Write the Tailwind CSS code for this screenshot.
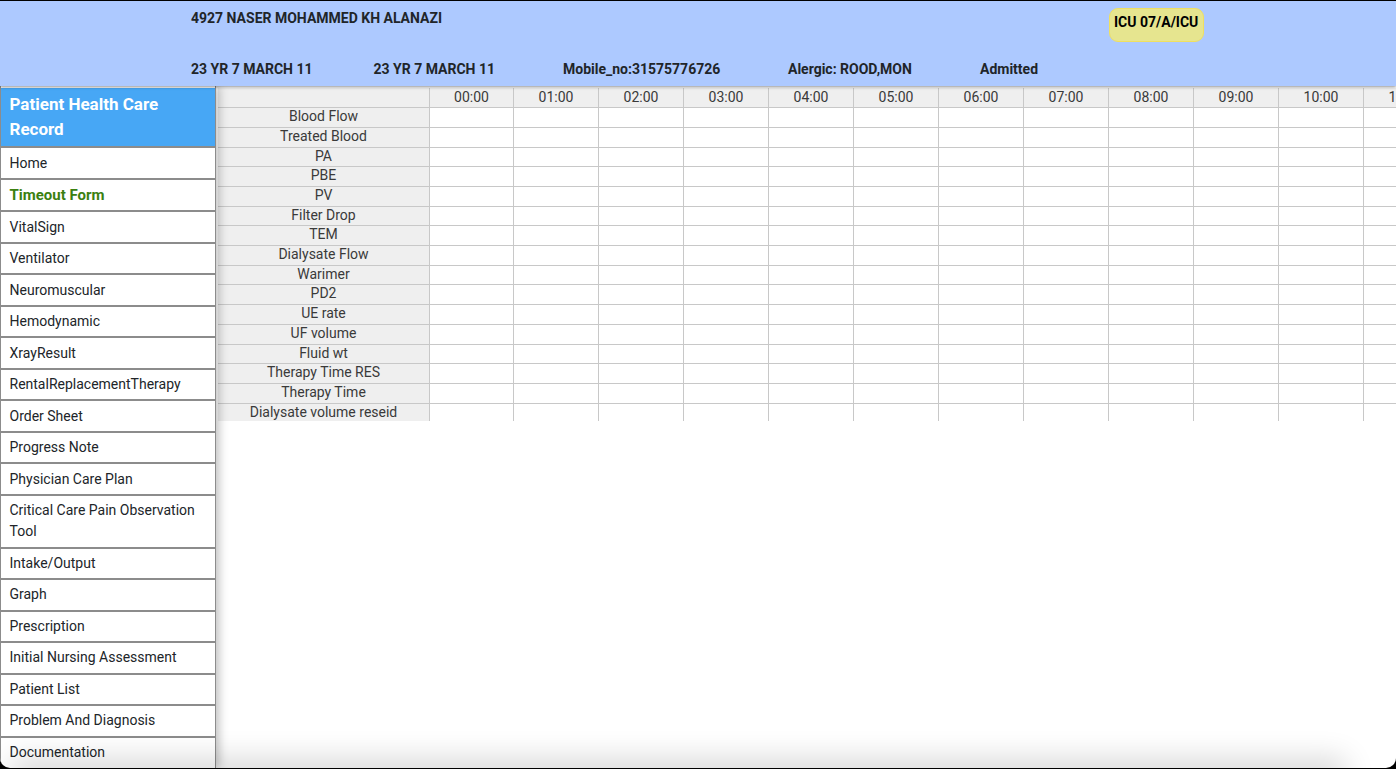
<!DOCTYPE html>
<html lang="en">
<head>
    <meta charset="utf-8">
    <title>Patient Health Care Record</title>
    <script src="https://cdn.jsdelivr.net/npm/@tailwindcss/browser@4"></script>
</head>
<body class="bg-black font-['Roboto',sans-serif] overflow-hidden">

<div class="relative h-[769px] w-[1396px] pt-px pb-px">
    <div class="relative flex h-full flex-col overflow-hidden rounded-b-[10px] bg-white">

        <!-- Patient banner -->
        <header class="relative z-20 h-[85px] shrink-0 bg-[#adc9ff] pl-[191px] text-[14px] font-bold text-[#212529] shadow-[0_1px_3px_rgba(0,0,0,0.45)]">
            <div class="flex h-[50px] pt-[9px]">
                <span class="w-[918px] leading-[17px]">4927 NASER MOHAMMED KH ALANAZI</span>
                <span class="h-[34px] -mt-[2px] w-[95px] rounded-[9px] border border-[#f0e060] bg-[#e6e58f] pl-[4px] pt-[5px] leading-[17px] text-black">ICU 07/A/ICU</span>
            </div>
            <div class="flex leading-[17px] pt-[10px]">
                <span class="w-[182.5px]">23 YR 7 MARCH 11</span>
                <span class="w-[189.5px]">23 YR 7 MARCH 11</span>
                <span class="w-[225px]">Mobile_no:31575776726</span>
                <span class="w-[192px]">Alergic: ROOD,MON</span>
                <span>Admitted</span>
            </div>
        </header>

        <div class="flex min-h-0 flex-1">
            <!-- Sidebar -->
            <nav class="relative z-10 w-[216px] shrink-0 border-x border-[#8c8c8c] pt-[2px] text-[14px] text-[#212529] shadow-[3px_0_9px_rgba(0,0,0,0.25)]">
                <div class="h-[60px] border-b-2 border-[#8c8c8c] bg-[#47a7f5] pl-[8.5px] pr-[20px] pt-[4px] text-[17px] font-bold leading-[25px] text-white">Patient Health Care Record</div>
                <a class="block h-[31.5px] border-b-2 border-[#8c8c8c] px-[8.5px] pt-[4.6px] leading-[20px]">Home</a>
                <a class="block h-[32.5px] border-b-2 border-[#8c8c8c] px-[8.5px] pt-[5px] text-[15px] font-bold leading-[20px] text-[#3b8010]">Timeout Form</a>
                <a class="block h-[31.5px] border-b-2 border-[#8c8c8c] px-[8.5px] pt-[4.6px] leading-[20px]">VitalSign</a>
                <a class="block h-[31.5px] border-b-2 border-[#8c8c8c] px-[8.5px] pt-[4.6px] leading-[20px]">Ventilator</a>
                <a class="block h-[31.5px] border-b-2 border-[#8c8c8c] px-[8.5px] pt-[4.6px] leading-[20px]">Neuromuscular</a>
                <a class="block h-[31.5px] border-b-2 border-[#8c8c8c] px-[8.5px] pt-[4.6px] leading-[20px]">Hemodynamic</a>
                <a class="block h-[31.5px] border-b-2 border-[#8c8c8c] px-[8.5px] pt-[4.6px] leading-[20px]">XrayResult</a>
                <a class="block h-[31.5px] border-b-2 border-[#8c8c8c] px-[8.5px] pt-[4.6px] leading-[20px]">RentalReplacementTherapy</a>
                <a class="block h-[31.5px] border-b-2 border-[#8c8c8c] px-[8.5px] pt-[4.6px] leading-[20px]">Order Sheet</a>
                <a class="block h-[31.5px] border-b-2 border-[#8c8c8c] px-[8.5px] pt-[4.6px] leading-[20px]">Progress Note</a>
                <a class="block h-[31.5px] border-b-2 border-[#8c8c8c] px-[8.5px] pt-[4.6px] leading-[20px]">Physician Care Plan</a>
                <a class="block h-[53px] border-b-2 border-[#8c8c8c] px-[8.5px] pt-[4.6px] leading-[21px]">Critical Care Pain Observation Tool</a>
                <a class="block h-[31.5px] border-b-2 border-[#8c8c8c] px-[8.5px] pt-[4.6px] leading-[20px]">Intake/Output</a>
                <a class="block h-[31.5px] border-b-2 border-[#8c8c8c] px-[8.5px] pt-[4.4px] leading-[20px]">Graph</a>
                <a class="block h-[31.5px] border-b-2 border-[#8c8c8c] px-[8.5px] pt-[4.4px] leading-[20px]">Prescription</a>
                <a class="block h-[31.5px] border-b-2 border-[#8c8c8c] px-[8.5px] pt-[4.4px] leading-[20px]">Initial Nursing Assessment</a>
                <a class="block h-[31.5px] border-b-2 border-[#8c8c8c] px-[8.5px] pt-[4.4px] leading-[20px]">Patient List</a>
                <a class="block h-[31.5px] border-b-2 border-[#8c8c8c] px-[8.5px] pt-[4.4px] leading-[20px]">Problem And Diagnosis</a>
                <a class="block h-[31.5px] px-[8.5px] pt-[4.4px] leading-[20px]">Documentation</a>
            </nav>

            <!-- Chart grid -->
            <main class="min-w-0 flex-1 overflow-hidden pl-[2px] pt-[2px]">
                <div class="grid h-[333px] w-max grid-cols-[211px_84px_repeat(11,85px)] grid-rows-[20.3px] auto-rows-[19.7px] overflow-hidden text-center text-[14px] leading-[17px] text-[#3a3a3a] [&>*]:border-b [&>*]:border-[#c8c8c8] [&>*:not(:nth-child(13n+1))]:border-l [&>*:nth-last-child(-n+13)]:border-b-0 [&>*:nth-child(13n+1)]:bg-[#efefef] [&>*:nth-child(-n+13)]:bg-[#efefef] [&>*:nth-child(-n+13)]:leading-[18px]">
                    <div></div><div>00:00</div><div>01:00</div><div>02:00</div><div>03:00</div><div>04:00</div><div>05:00</div><div>06:00</div><div>07:00</div><div>08:00</div><div>09:00</div><div>10:00</div><div>11:00</div>
                    <div>Blood Flow</div><div></div><div></div><div></div><div></div><div></div><div></div><div></div><div></div><div></div><div></div><div></div><div></div>
                    <div>Treated Blood</div><div></div><div></div><div></div><div></div><div></div><div></div><div></div><div></div><div></div><div></div><div></div><div></div>
                    <div>PA</div><div></div><div></div><div></div><div></div><div></div><div></div><div></div><div></div><div></div><div></div><div></div><div></div>
                    <div>PBE</div><div></div><div></div><div></div><div></div><div></div><div></div><div></div><div></div><div></div><div></div><div></div><div></div>
                    <div>PV</div><div></div><div></div><div></div><div></div><div></div><div></div><div></div><div></div><div></div><div></div><div></div><div></div>
                    <div>Filter Drop</div><div></div><div></div><div></div><div></div><div></div><div></div><div></div><div></div><div></div><div></div><div></div><div></div>
                    <div>TEM</div><div></div><div></div><div></div><div></div><div></div><div></div><div></div><div></div><div></div><div></div><div></div><div></div>
                    <div>Dialysate Flow</div><div></div><div></div><div></div><div></div><div></div><div></div><div></div><div></div><div></div><div></div><div></div><div></div>
                    <div>Warimer</div><div></div><div></div><div></div><div></div><div></div><div></div><div></div><div></div><div></div><div></div><div></div><div></div>
                    <div>PD2</div><div></div><div></div><div></div><div></div><div></div><div></div><div></div><div></div><div></div><div></div><div></div><div></div>
                    <div>UE rate</div><div></div><div></div><div></div><div></div><div></div><div></div><div></div><div></div><div></div><div></div><div></div><div></div>
                    <div>UF volume</div><div></div><div></div><div></div><div></div><div></div><div></div><div></div><div></div><div></div><div></div><div></div><div></div>
                    <div>Fluid wt</div><div></div><div></div><div></div><div></div><div></div><div></div><div></div><div></div><div></div><div></div><div></div><div></div>
                    <div>Therapy Time RES</div><div></div><div></div><div></div><div></div><div></div><div></div><div></div><div></div><div></div><div></div><div></div><div></div>
                    <div>Therapy Time</div><div></div><div></div><div></div><div></div><div></div><div></div><div></div><div></div><div></div><div></div><div></div><div></div>
                    <div>Dialysate volume reseid</div><div></div><div></div><div></div><div></div><div></div><div></div><div></div><div></div><div></div><div></div><div></div><div></div>
                </div>
            </main>
        </div>

        <!-- Bottom edge fade over the page -->
        <div class="pointer-events-none absolute -bottom-[14px] left-[20px] right-[60px] z-30 h-[14px] shadow-[0_0_30px_9px_rgba(0,0,0,0.16)]"></div>
    </div>
</div>

</body>
</html>
